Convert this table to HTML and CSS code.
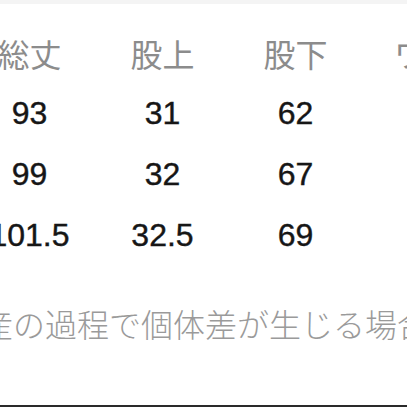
FILE: index.html
```html
<!DOCTYPE html>
<html lang="ja">
<head>
<meta charset="utf-8">
<link rel="stylesheet" href="styles.css">
</head>
<body>
<div class="topband"></div>
<div class="size-table">
  <div class="cell head">総丈</div>
  <div class="cell head">股上</div>
  <div class="cell head">股下</div>
  <div class="cell head">ワタリ</div>

  <div class="cell num">93</div>
  <div class="cell num">31</div>
  <div class="cell num">62</div>
  <div class="cell num"></div>

  <div class="cell num">99</div>
  <div class="cell num">32</div>
  <div class="cell num">67</div>
  <div class="cell num"></div>

  <div class="cell num">101.5</div>
  <div class="cell num">32.5</div>
  <div class="cell num">69</div>
  <div class="cell num"></div>
</div>
<p class="note">生産の過程で個体差が生じる場合があります</p>
<div class="bottom-line"></div>
</body>
</html>
```
FILE: styles.css
```css
html, body {
  margin: 0;
  padding: 0;
  width: 407px;
  height: 407px;
  background: #ffffff;
  overflow: hidden;
}

body {
  display: flex;
  flex-direction: column;
  font-family: "Liberation Sans", "Noto Sans CJK JP", sans-serif;
}

.topband {
  height: 4px;
  background: #f4f4f4;
  flex: none;
}

.size-table {
  flex: none;
  display: grid;
  grid-template-columns: 133px 133px 133px 160px;
  grid-template-rows: 60px 61px 61px 61px;
  margin-top: 19px;
  margin-left: -37px;
  width: 559px;
}

.cell {
  display: flex;
  align-items: center;
  justify-content: center;
  white-space: nowrap;
  font-size: 32px;
}

.head {
  font-family: "Noto Sans CJK JP", sans-serif;
  color: #8c8c8c;
  font-weight: 400;
}

.num {
  font-family: "Liberation Sans", Arial, sans-serif;
  color: #161616;
  -webkit-text-stroke: 0.4px #161616;
}

.note {
  flex: none;
  margin: 37px 0 0 -51px;
  font-family: "Noto Sans CJK JP", sans-serif;
  font-weight: 300;
  font-size: 32px;
  line-height: 40px;
  color: #9a9a9a;
  white-space: nowrap;
}

.bottom-line {
  margin-top: auto;
  height: 2px;
  background: #2a2a2a;
  flex: none;
}
```
